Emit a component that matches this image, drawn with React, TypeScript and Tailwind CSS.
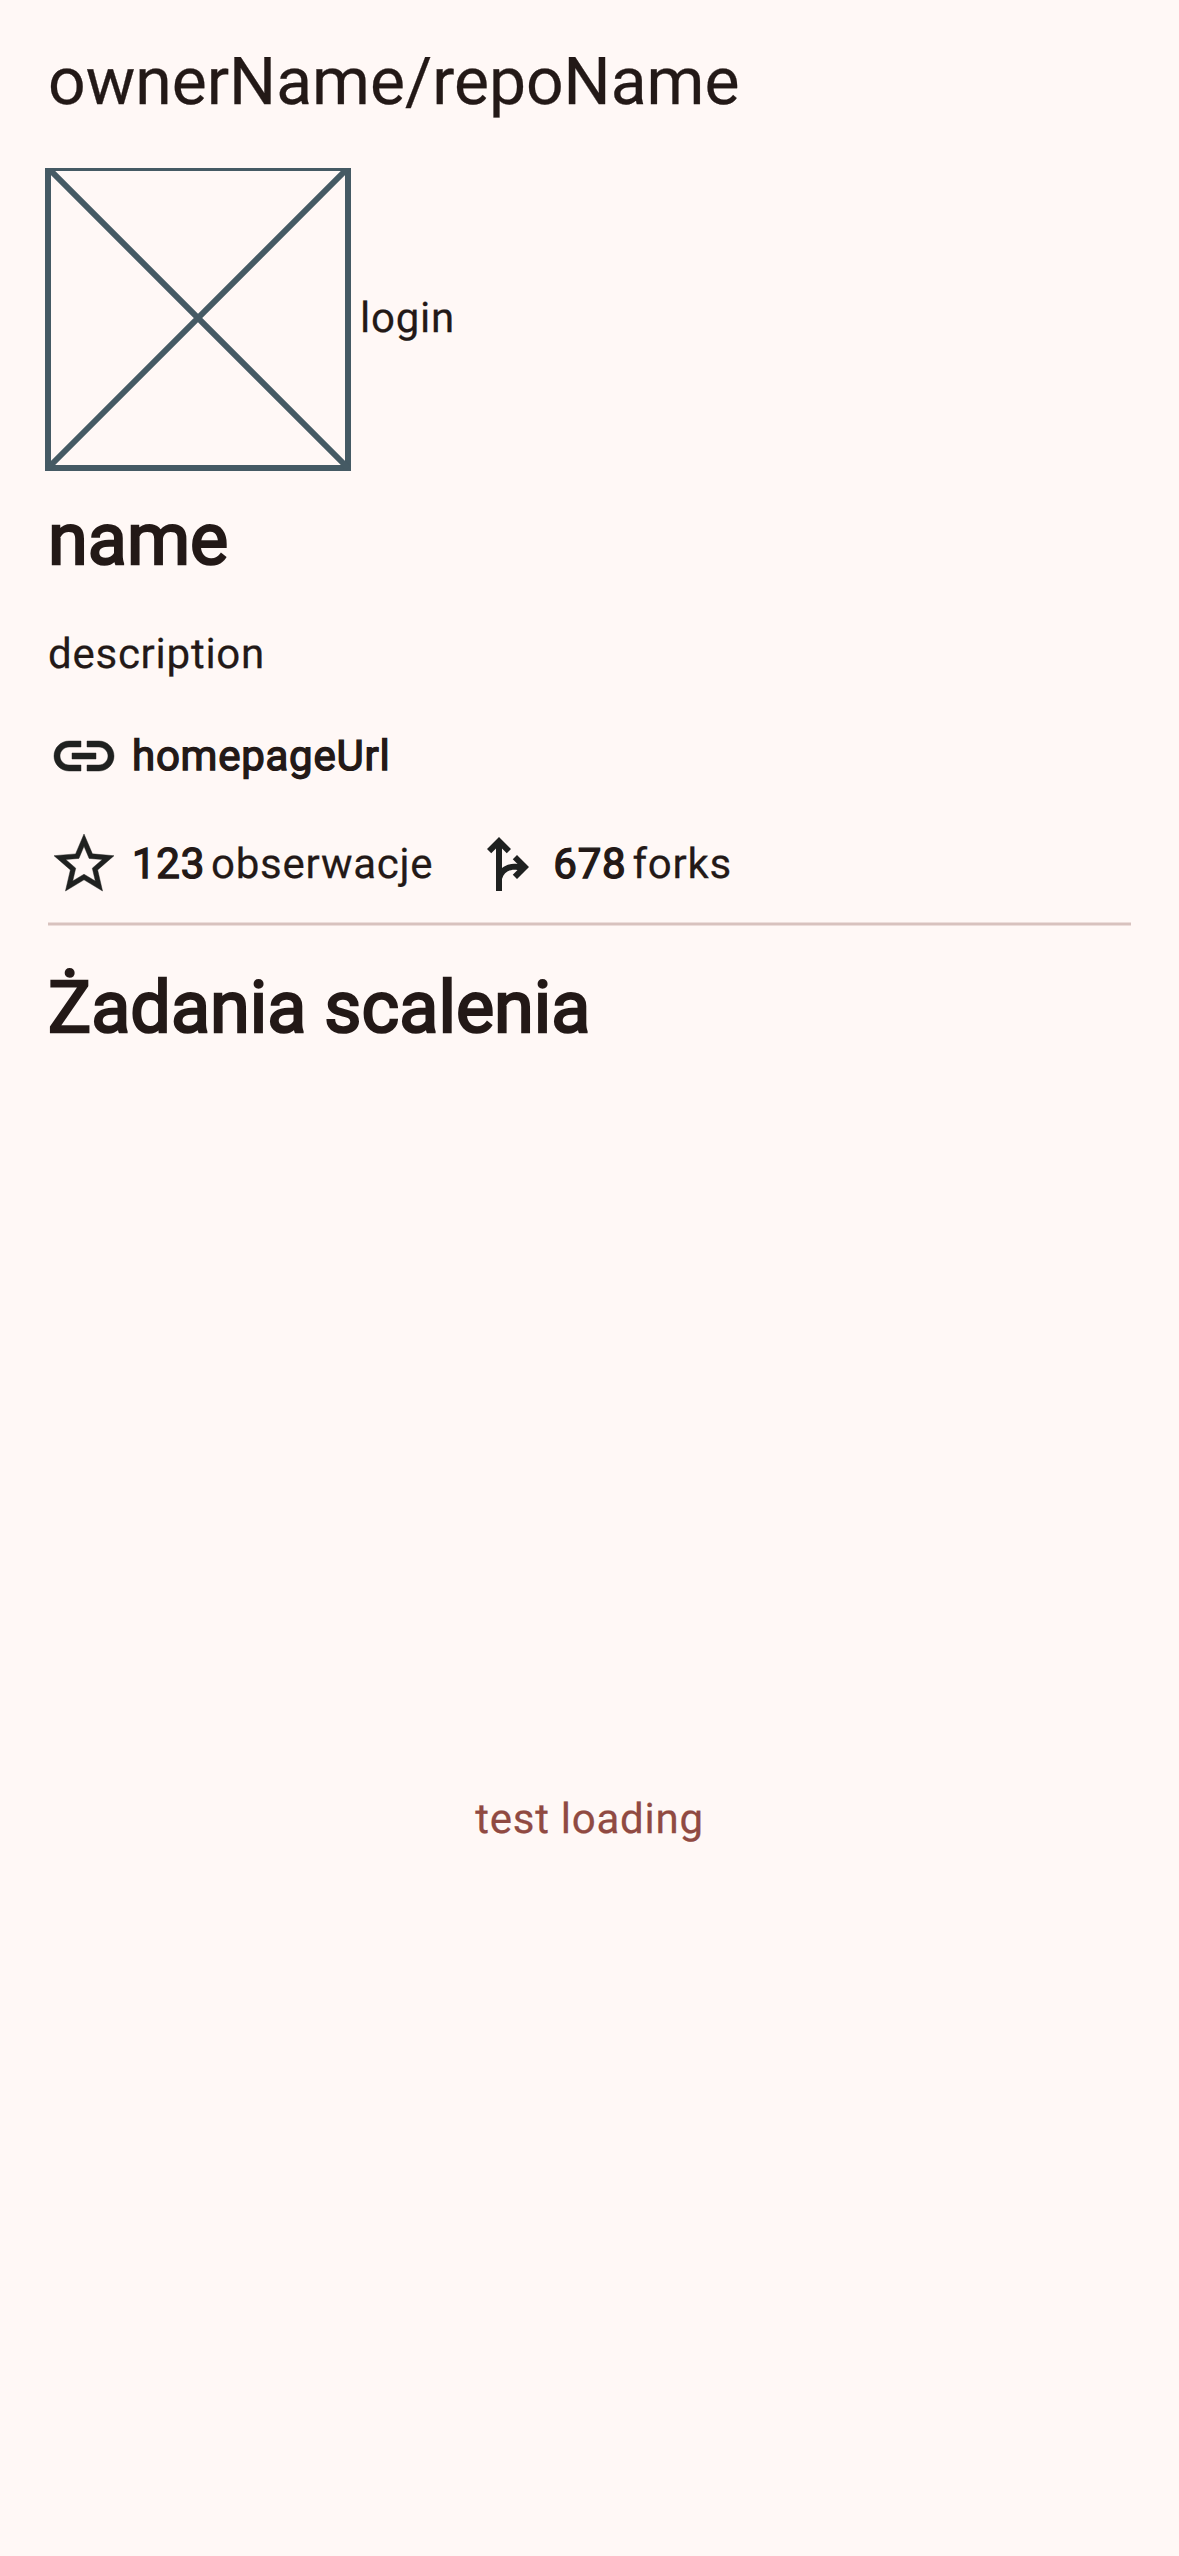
import type { ReactNode } from "react";
import { MdForkRight, MdStarOutline } from "react-icons/md";

function Body({ children, bold = false }: { children: ReactNode; bold?: boolean }) {
  return (
    <span
      className={
        bold
          ? "pt-0.5 text-[42px] leading-[60px] tracking-[0.75px] [-webkit-text-stroke:1.4px_currentColor]"
          : "pt-0.5 text-[42px] leading-[60px] tracking-[0.75px] [-webkit-text-stroke:0.25px_currentColor]"
      }
    >
      {children}
    </span>
  );
}

function Heading({ children }: { children: ReactNode }) {
  return (
    <h2 className="h-24 text-[72px] leading-[96px] [-webkit-text-stroke:2.3px_currentColor]">
      {children}
    </h2>
  );
}

function AvatarPlaceholder() {
  return (
    <svg
      width="306"
      height="303"
      viewBox="-3 0 306 303"
      fill="none"
      stroke="#455A64"
      strokeWidth="6"
      className="-ml-[3px] -mb-[3px] shrink-0"
    >
      <rect x="0" y="0" width="300" height="300" />
      <path d="M0 0L300 300M300 0L0 300" />
    </svg>
  );
}

function LinkIcon() {
  return (
    <svg
      width="72"
      height="72"
      viewBox="0 0 24 24"
      fill="#1F2120"
      stroke="#1F2120"
      strokeWidth="0.15"
      className="shrink-0"
    >
      <path d="M17 7h-4v2h4c1.65 0 3 1.35 3 3s-1.35 3-3 3h-4v2h4c2.76 0 5-2.24 5-5s-2.24-5-5-5zm-6 8H7c-1.65 0-3-1.35-3-3s1.35-3 3-3h4V7H7c-2.76 0-5 2.24-5 5s2.24 5 5 5h4v-2zm-3-4h8v2H8z" />
    </svg>
  );
}

function Stat({ icon, count, label }: { icon: ReactNode; count: string; label: string }) {
  return (
    <div className="flex items-center">
      {icon}
      <div className="ml-3 flex gap-1.5">
        <Body bold>{count}</Body>
        <Body>{label}</Body>
      </div>
    </div>
  );
}

export default function App() {
  return (
    <div className="flex h-[2556px] w-[1179px] flex-col bg-[#FFF8F6] font-[Roboto,sans-serif] text-[#231917] whitespace-nowrap [text-rendering:geometricPrecision]">
      <header className="px-12 pt-[41px]">
        <h1 className="text-[66px] leading-[84px] [-webkit-text-stroke:0.25px_currentColor]">
          ownerName/repoName
        </h1>
      </header>

      <section className="mt-[43px] flex flex-col px-12">
        <div className="flex items-center gap-[9px]">
          <AvatarPlaceholder />
          <Body>login</Body>
        </div>
        <div className="mt-6">
          <Heading>name</Heading>
        </div>
        <p className="mt-[35px] flex">
          <Body>description</Body>
        </p>
        <div className="mt-[35px] flex items-center gap-3">
          <LinkIcon />
          <Body bold>homepageUrl</Body>
        </div>
        <div className="mt-9 flex gap-9">
          <Stat
            icon={<MdStarOutline size={72} color="#1F2120" stroke="#1F2120" strokeWidth={0.15} />}
            count="123"
            label="obserwacje"
          />
          <Stat icon={<MdForkRight size={72} color="#1F2120" />} count="678" label="forks" />
        </div>
        <div className="mt-[22px] h-1 border-y border-[#ECDDDA] bg-[#D8C2BE]" />
        <div className="mt-[34px]">
          <Heading>Żadania scalenia</Heading>
        </div>
      </section>

      <main className="flex flex-1 items-center justify-center pt-[26px] text-[#904A42]">
        <Body>test loading</Body>
      </main>
    </div>
  );
}
